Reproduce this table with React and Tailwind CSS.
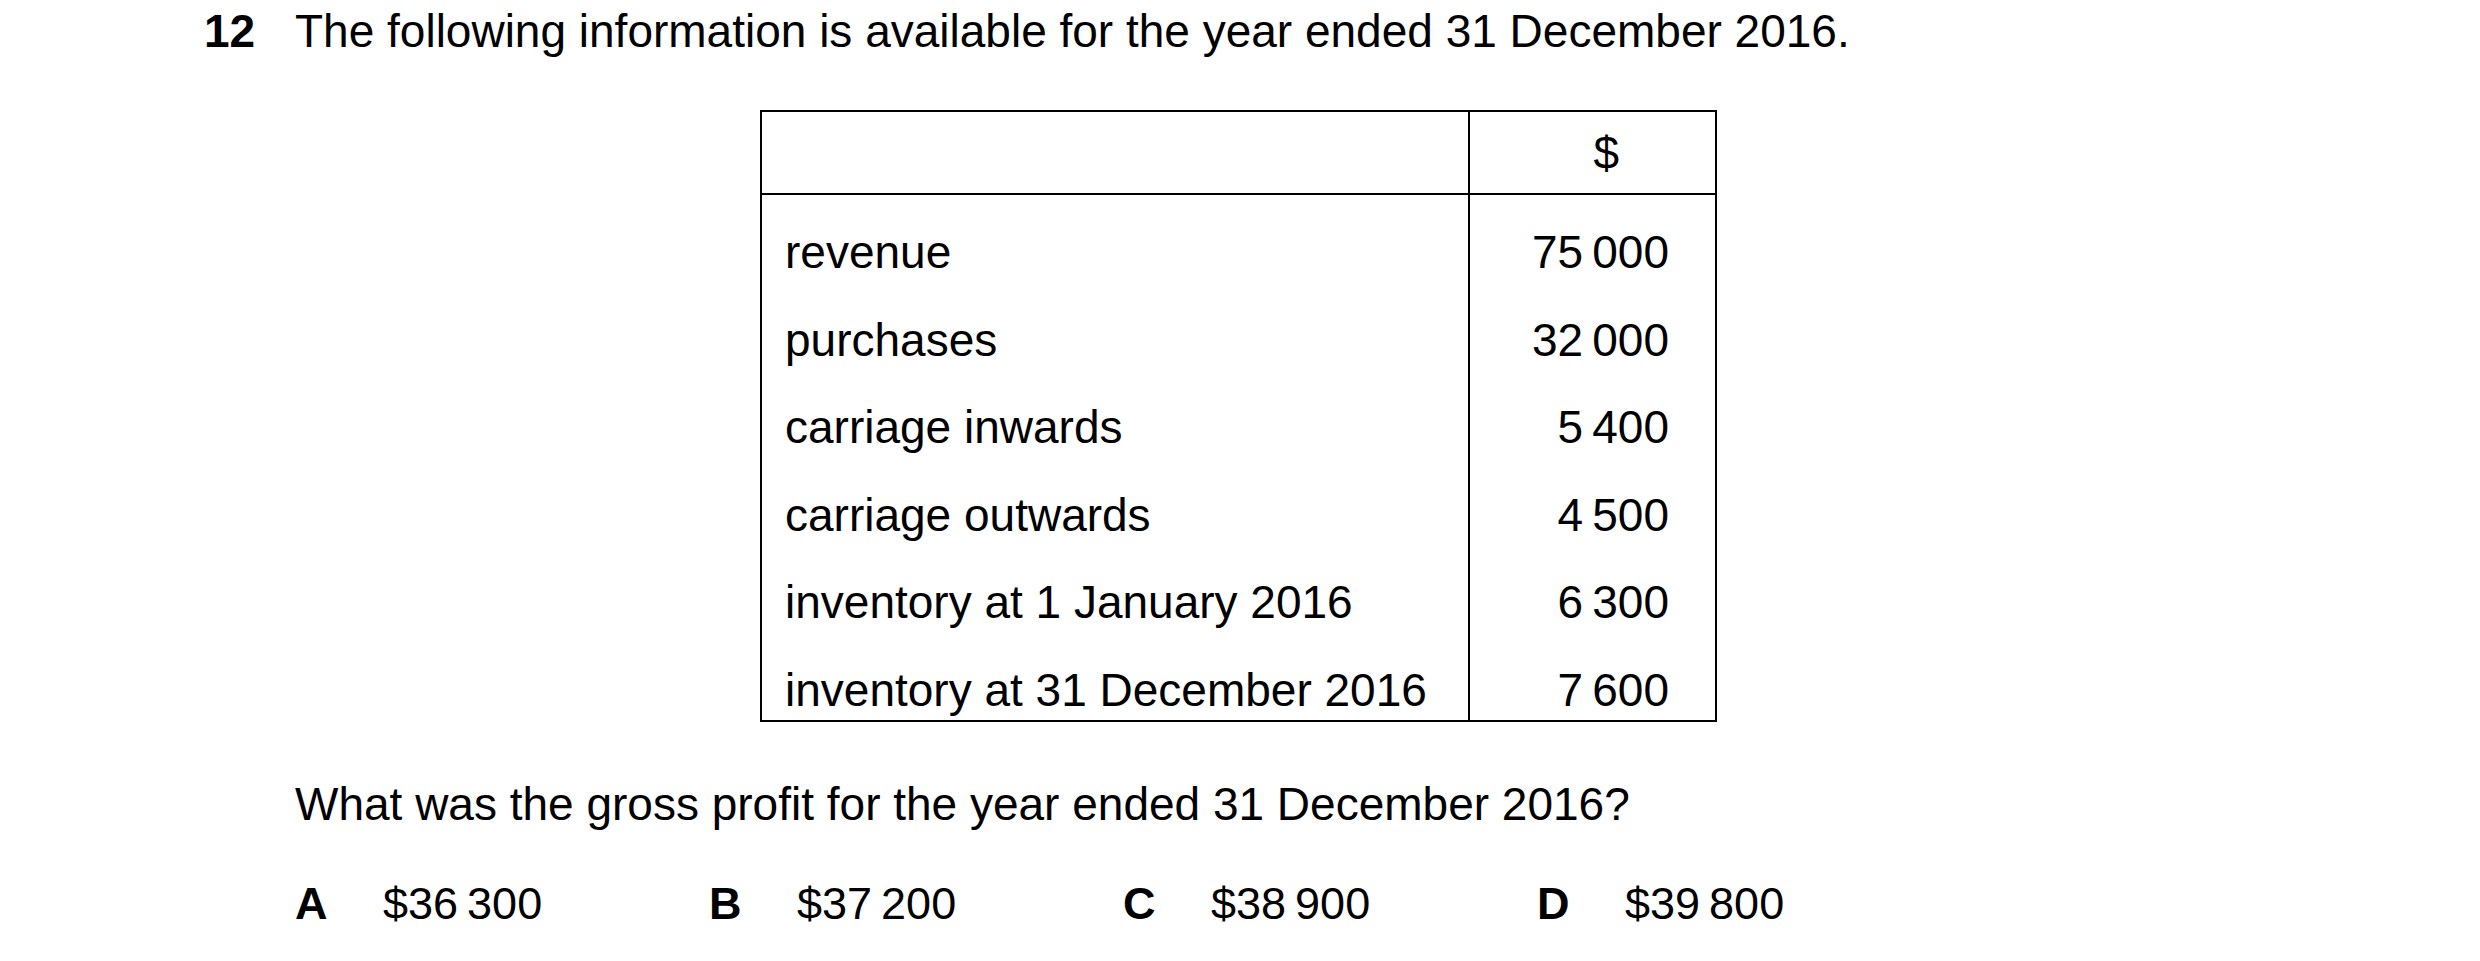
const rows = [
  { label: "revenue", amount: "75\u2009000" },
  { label: "purchases", amount: "32\u2009000" },
  { label: "carriage inwards", amount: "5\u2009400" },
  { label: "carriage outwards", amount: "4\u2009500" },
  { label: "inventory at 1 January 2016", amount: "6\u2009300" },
  { label: "inventory at 31 December 2016", amount: "7\u2009600" },
]

const answers = [
  { key: "A", value: "$36\u2009300" },
  { key: "B", value: "$37\u2009200" },
  { key: "C", value: "$38\u2009900" },
  { key: "D", value: "$39\u2009800" },
]

export default function App() {
  return (
    <div className="min-h-screen w-[2480px] bg-white text-black font-['Liberation_Sans',Arial,sans-serif]">
      {/* question heading */}
      <div className="flex pl-[204px] text-[46px] leading-[62px]">
        <span className="w-[91px] font-bold">12</span>
        <span>The following information is available for the year ended 31 December 2016.</span>
      </div>

      {/* data table */}
      <div className="mt-[48px] ml-[760px] w-[957px] border-2 border-black text-[46px]">
        <div className="flex h-[83px] border-b-2 border-black">
          <div className="w-[708px] border-r-2 border-black" />
          <div className="flex flex-1 items-center justify-end pr-[96px] leading-none">$</div>
        </div>
        {rows.map((row) => (
          <div key={row.label} className="flex h-[87.5px]">
            <div className="w-[708px] border-r-2 border-black pl-[23px] pt-[35px] leading-[45px]">
              {row.label}
            </div>
            <div className="flex-1 pr-[46px] pt-[35px] text-right leading-[45px]">{row.amount}</div>
          </div>
        ))}
      </div>

      <p className="mt-[48px] pl-[295px] text-[46px] leading-normal">
        What was the gross profit for the year ended 31 December 2016?
      </p>

      {/* options */}
      <div className="mt-[31px] grid w-fit grid-cols-[414px_414px_414px_414px] pl-[295px] text-[45px] leading-normal">
        {answers.map((a) => (
          <div key={a.key} className="flex">
            <span className="w-[88px] font-bold">{a.key}</span>
            <span>{a.value}</span>
          </div>
        ))}
      </div>
    </div>
  )
}
